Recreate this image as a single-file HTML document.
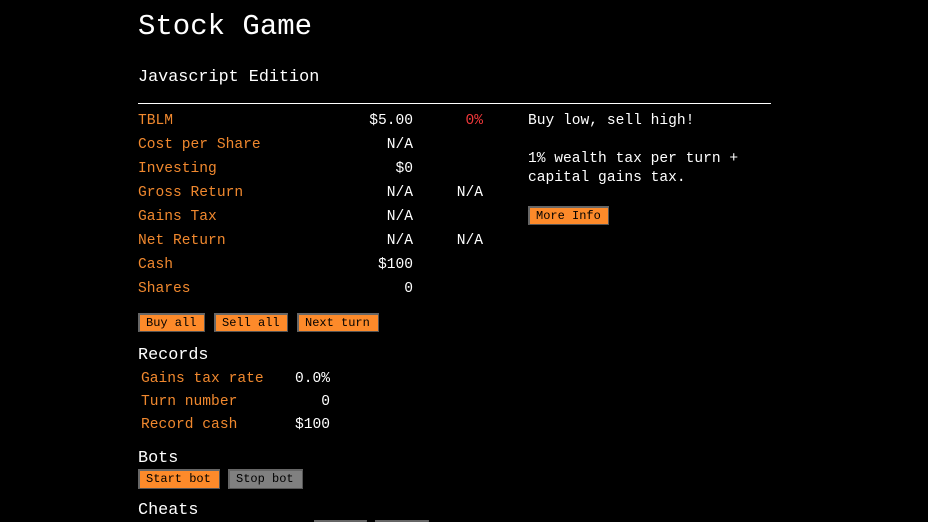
<!DOCTYPE html>
<html style="overflow:hidden;height:522px"><head><style>
body{margin:0;background:#000;width:928px;height:522px;overflow:hidden;position:relative;font-family:"Liberation Mono",monospace;color:#fff}
.a{position:absolute;white-space:nowrap}
.o{color:#f0882e}
.t{font-size:14.6px;line-height:18px}
.r{text-align:right}
.b{position:absolute;height:19px;background:#fd8a2a;color:#000;font-size:12px;line-height:17px;border-top:2px solid #666;border-left:2px solid #666;border-right:1px solid #555;border-bottom:1px solid #555;box-sizing:border-box;padding-left:6px}
.g{background:#808080}
</style></head><body>
<div class="a" style="left:138px;top:9px;font-size:29px;line-height:36px">Stock Game</div>
<div class="a" style="left:138px;top:67px;font-size:16.8px;line-height:22px">Javascript Edition</div>
<div class="a" style="left:138px;top:103px;width:633px;height:1px;background:#fff"></div>

<div class="a t o" style="left:138px;top:112px">TBLM</div>
<div class="a t r" style="right:515px;top:112px">$5.00</div>
<div class="a t r" style="right:445px;top:112px;color:#f0383a">0%</div>
<div class="a t o" style="left:138px;top:136px">Cost per Share</div>
<div class="a t r" style="right:515px;top:136px">N/A</div>
<div class="a t o" style="left:138px;top:160px">Investing</div>
<div class="a t r" style="right:515px;top:160px">$0</div>
<div class="a t o" style="left:138px;top:184px">Gross Return</div>
<div class="a t r" style="right:515px;top:184px">N/A</div>
<div class="a t r" style="right:445px;top:184px">N/A</div>
<div class="a t o" style="left:138px;top:208px">Gains Tax</div>
<div class="a t r" style="right:515px;top:208px">N/A</div>
<div class="a t o" style="left:138px;top:232px">Net Return</div>
<div class="a t r" style="right:515px;top:232px">N/A</div>
<div class="a t r" style="right:445px;top:232px">N/A</div>
<div class="a t o" style="left:138px;top:256px">Cash</div>
<div class="a t r" style="right:515px;top:256px">$100</div>
<div class="a t o" style="left:138px;top:280px">Shares</div>
<div class="a t r" style="right:515px;top:280px">0</div>

<div class="b" style="left:138px;top:313px;width:67px">Buy all</div>
<div class="b" style="left:214px;top:313px;width:74px">Sell all</div>
<div class="b" style="left:297px;top:313px;width:82px">Next turn</div>

<div class="a t" style="left:528px;top:112px">Buy low, sell high!</div>
<div class="a t" style="left:528px;top:150px">1% wealth tax per turn +</div>
<div class="a t" style="left:528px;top:169px">capital gains tax.</div>
<div class="b" style="left:528px;top:206px;width:81px">More Info</div>

<div class="a" style="left:138px;top:345px;font-size:16.8px;line-height:22px">Records</div>
<div class="a t o" style="left:141px;top:370px">Gains tax rate</div>
<div class="a t r" style="right:598px;top:370px">0.0%</div>
<div class="a t o" style="left:141px;top:393px">Turn number</div>
<div class="a t r" style="right:598px;top:393px">0</div>
<div class="a t o" style="left:141px;top:416px">Record cash</div>
<div class="a t r" style="right:598px;top:416px">$100</div>

<div class="a" style="left:138px;top:448px;font-size:16.8px;line-height:22px">Bots</div>
<div class="b" style="left:138px;top:469px;width:82px;height:20px">Start bot</div>
<div class="b g" style="left:228px;top:469px;width:75px;height:20px">Stop bot</div>
<div class="a" style="left:138px;top:500px;font-size:16.8px;line-height:22px">Cheats</div>
<div class="b" style="left:314px;top:520px;width:53px;height:2px;border-bottom:0"></div>
<div class="b g" style="left:375px;top:520px;width:54px;height:2px;border-bottom:0"></div>
</body></html>
